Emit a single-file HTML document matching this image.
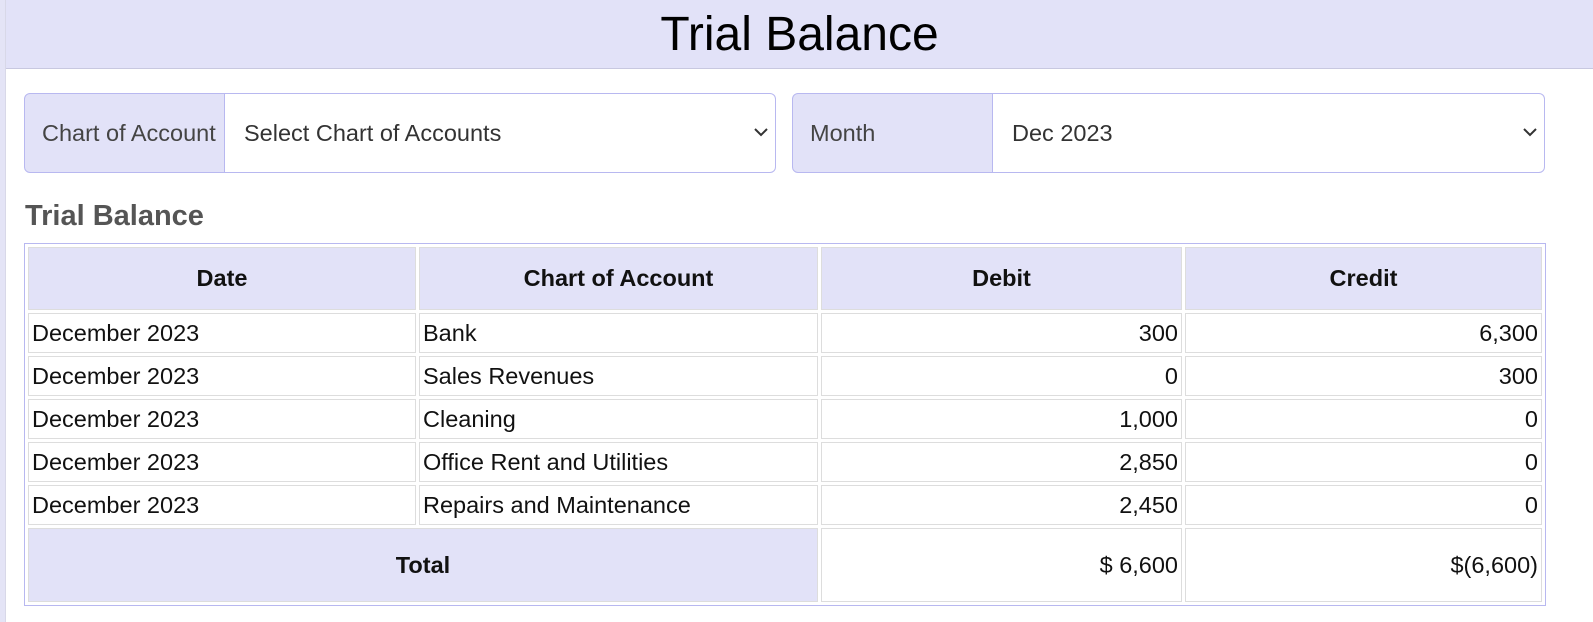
<!DOCTYPE html>
<html><head><style>
*{box-sizing:border-box;margin:0;padding:0}
body{width:1593px;height:622px;background:#fff;font-family:"Liberation Sans",sans-serif;position:relative;overflow:hidden}
.strip{position:absolute;left:0;top:0;width:6px;height:622px;background:#e4e4f6;border-right:1px solid #d8d8e8}
.hdr{position:absolute;left:6px;top:0;width:1587px;height:69px;background:#e2e2f8;border-bottom:1px solid #c8c8e0;text-align:center;font-size:48px;line-height:70px;color:#000}
.grp{position:absolute;top:93px;height:80px;display:flex}
.lbl{background:#e2e2f8;border:1px solid #b8b8f0;border-radius:6px 0 0 6px;font-size:23.5px;color:#444;line-height:78px;padding-left:17px;white-space:nowrap}
.sel{background:#fff;border:1px solid #b8b8f0;border-left:none;border-radius:0 6px 6px 0;font-size:23.5px;color:#333;line-height:78px;padding-left:19px;position:relative}
.sel svg{position:absolute;right:6px;top:33px}
h2{position:absolute;left:25px;top:200px;font-size:29px;color:#555;font-weight:bold}
table{position:absolute;left:24px;top:243px;width:1522px;border:1px solid #b8b8f0;border-spacing:3px;font-size:23.5px;color:#111}
td,th{border:1px solid #ddd;padding:0 3px}
th{background:#e2e2f8;height:63px;font-weight:bold}
td{height:40px}
.r{text-align:right}
.tot td{height:74px}
.tot td.t{background:#e2e2f8;text-align:center;font-weight:bold}
</style></head><body>
<div class="strip"></div>
<div class="hdr">Trial Balance</div>
<div class="grp" style="left:24px;width:752px"><div class="lbl" style="width:201px">Chart of Account</div><div class="sel" style="width:551px">Select Chart of Accounts<svg width="16" height="10" viewBox="0 0 16 10"><path d="M2 2l6 6 6-6" stroke="#333" stroke-width="2" fill="none"/></svg></div></div>
<div class="grp" style="left:792px;width:753px"><div class="lbl" style="width:201px">Month</div><div class="sel" style="width:552px">Dec 2023<svg width="16" height="10" viewBox="0 0 16 10"><path d="M2 2l6 6 6-6" stroke="#333" stroke-width="2" fill="none"/></svg></div></div>
<h2>Trial Balance</h2>
<table>
<tr><th style="width:388px">Date</th><th style="width:399px">Chart of Account</th><th style="width:361px">Debit</th><th>Credit</th></tr>
<tr><td>December 2023</td><td>Bank</td><td class="r">300</td><td class="r">6,300</td></tr>
<tr><td>December 2023</td><td>Sales Revenues</td><td class="r">0</td><td class="r">300</td></tr>
<tr><td>December 2023</td><td>Cleaning</td><td class="r">1,000</td><td class="r">0</td></tr>
<tr><td>December 2023</td><td>Office Rent and Utilities</td><td class="r">2,850</td><td class="r">0</td></tr>
<tr><td>December 2023</td><td>Repairs and Maintenance</td><td class="r">2,450</td><td class="r">0</td></tr>
<tr class="tot"><td class="t" colspan="2">Total</td><td class="r">$ 6,600</td><td class="r">$(6,600)</td></tr>
</table>
</body></html>
